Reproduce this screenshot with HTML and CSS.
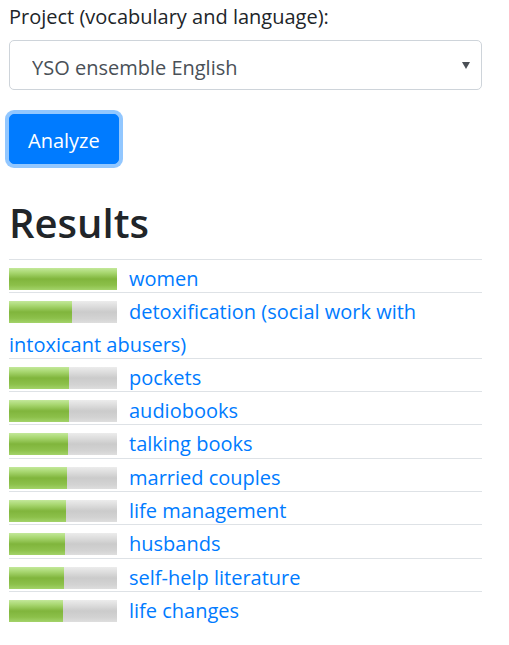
FILE: index.html
```html
<!DOCTYPE html>
<html lang="en">
<head>
<meta charset="utf-8">
<title>Annif</title>
<link rel="stylesheet" href="styles.css">
</head>
<body>
<main class="page">
  <label class="field-label" for="project">Project (vocabulary and language):</label>
  <div class="select-wrap">
    <select id="project" class="select">
      <option>YSO ensemble English</option>
    </select>
    <svg class="select-arrow" width="8" height="7" viewBox="0 0 8 7"><path d="M0 0H8L4 7Z" fill="#4a4f55"/></svg>
  </div>
  <button class="btn" type="button">Analyze</button>
  <h2 class="results-title">Results</h2>
  <ul class="results">
    <li class="result"><span class="bar"><span class="fill" style="width:108px"></span></span><a href="#">women</a></li>
    <li class="result"><span class="bar"><span class="fill" style="width:63px"></span></span><a href="#">detoxification (social work with intoxicant abusers)</a></li>
    <li class="result"><span class="bar"><span class="fill" style="width:60px"></span></span><a href="#">pockets</a></li>
    <li class="result"><span class="bar"><span class="fill" style="width:60px"></span></span><a href="#">audiobooks</a></li>
    <li class="result"><span class="bar"><span class="fill" style="width:59px"></span></span><a href="#">talking books</a></li>
    <li class="result"><span class="bar"><span class="fill" style="width:58px"></span></span><a href="#">married couples</a></li>
    <li class="result"><span class="bar"><span class="fill" style="width:57px"></span></span><a href="#">life management</a></li>
    <li class="result"><span class="bar"><span class="fill" style="width:56px"></span></span><a href="#">husbands</a></li>
    <li class="result"><span class="bar"><span class="fill" style="width:55px"></span></span><a href="#">self-help literature</a></li>
    <li class="result"><span class="bar"><span class="fill" style="width:54px"></span></span><a href="#">life changes</a></li>
  </ul>
</main>
</body>
</html>
```

FILE: styles.css
```css
html, body {
  margin: 0;
  padding: 0;
  background: #fff;
}

body {
  font-family: "Open Sans", "Noto Sans", sans-serif;
  font-size: 20px;
  line-height: 1.5;
  color: #212529;
}

.page {
  width: 473px;
  padding: 2px 0 0 9px;
  display: flex;
  flex-direction: column;
  align-items: flex-start;
}

.field-label {
  display: block;
  margin-bottom: 8px;
  font-size: 20px;
}

.select-wrap {
  position: relative;
  width: 100%;
}

.select {
  appearance: none;
  -webkit-appearance: none;
  display: block;
  width: 100%;
  height: 50px;
  margin: 0;
  padding: 5px 30px 0 22px;
  border: 1px solid #ced4da;
  border-radius: 5px;
  background: #fff;
  font-family: inherit;
  font-size: 20px;
  color: #495057;
}

.select-arrow {
  position: absolute;
  right: 12px;
  top: 22px;
}

.btn {
  margin-top: 24px;
  height: 50px;
  padding: 2px 18px 0;
  border: 1px solid #007bff;
  border-radius: 5px;
  background: #007bff;
  color: #fff;
  font-family: inherit;
  font-size: 20px;
  box-shadow: 0 0 0 4px rgba(38, 143, 255, 0.5);
}

.results-title {
  margin: 35px 0 12px;
  font-size: 40px;
  font-weight: 600;
  line-height: 1.2;
}

.results {
  list-style: none;
  margin: 0;
  padding: 0;
  width: 100%;
}

.result {
  border-top: 1px solid #dee2e6;
  line-height: 32.3px;
}

.result::after {
  content: "";
  display: block;
  clear: both;
}

.bar {
  float: left;
  width: 108px;
  height: 22px;
  margin: 8px 12px 0 0;
  background: linear-gradient(#ececec 0%, #dcdcdc 25%, #cbcbcb 50%, #d3d3d3 80%, #dedede 100%);
}

.fill {
  display: block;
  height: 100%;
  background: linear-gradient(#c3e89a 0%, #a7d66f 22%, #80b53c 50%, #8cc04a 78%, #a3d36a 100%);
}

.result a {
  color: #007bff;
  text-decoration: none;
  line-height: 26px;
  vertical-align: -3px;
}
```
